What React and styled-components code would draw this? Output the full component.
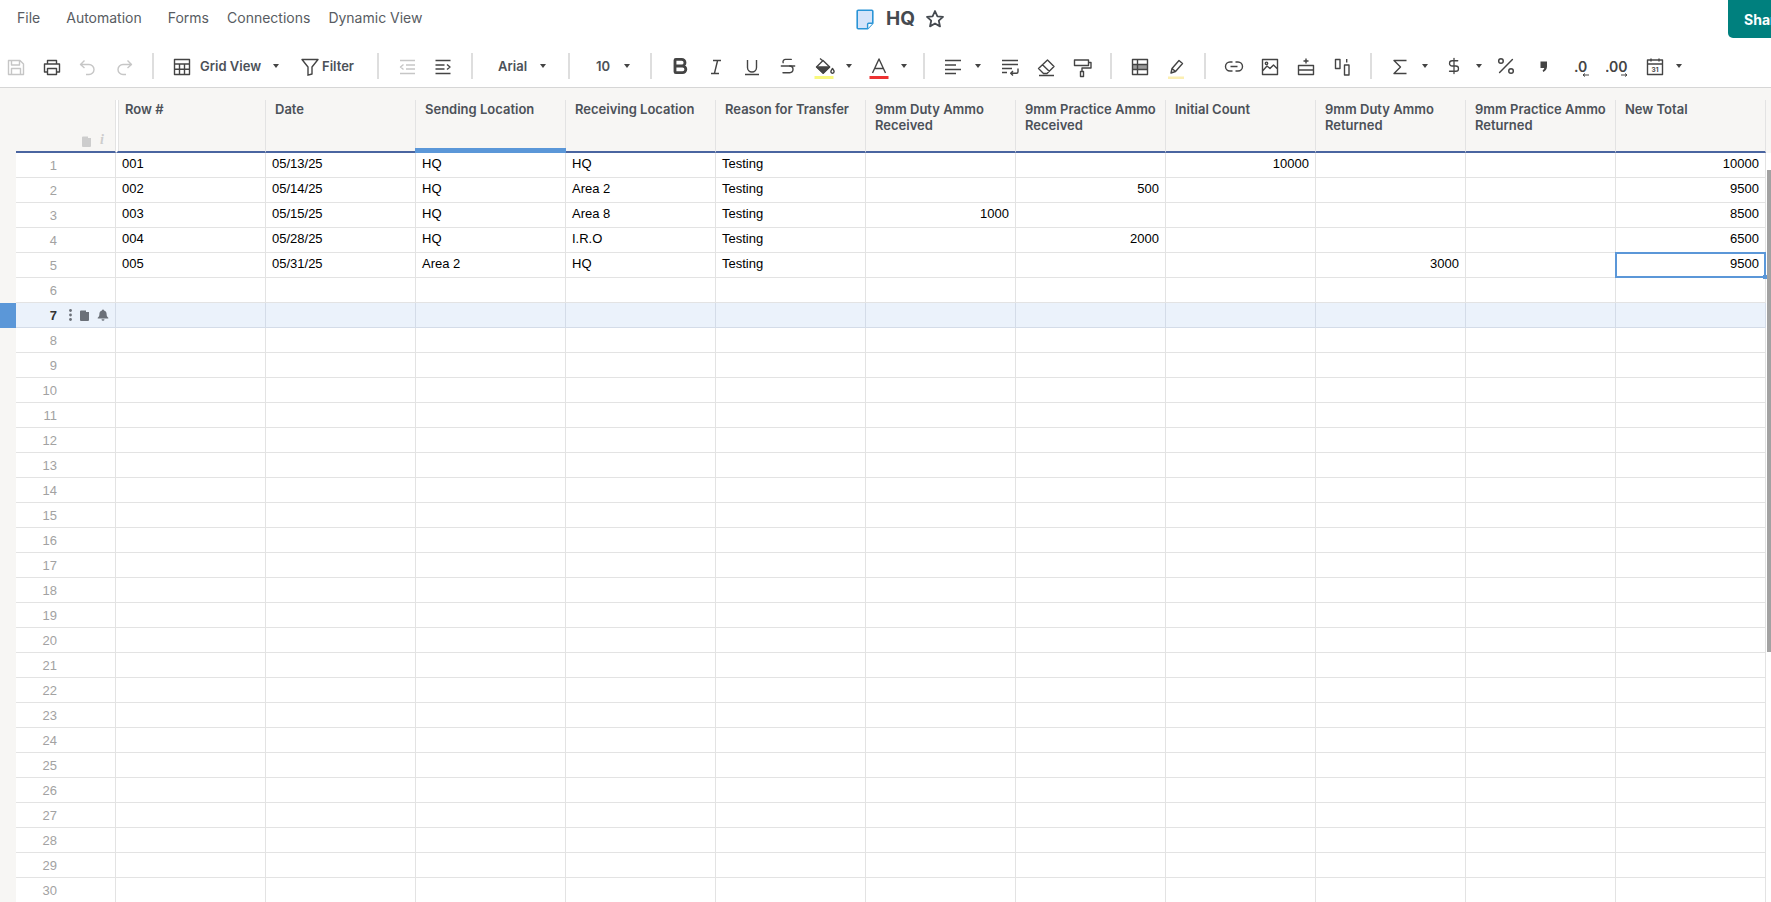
import React from 'react';
import styled, { createGlobalStyle } from 'styled-components';
import { Bold, Strikethrough, DollarSign, Percent } from 'lucide-react';

const Global = createGlobalStyle`
  html, body { margin: 0; padding: 0; height: 902px; overflow: hidden; background: #fff; }
  body { font-family: "Liberation Sans", Arial, sans-serif; }
`;

const Page = styled.div`
  width: 1771px;
  height: 902px;
  overflow: hidden;
  position: relative;
  display: flex;
  flex-direction: column;
  background: #fff;
`;

const TopBar = styled.header`
  height: 44px;
  flex: none;
  display: flex;
  align-items: flex-start;
`;

const Menu = styled.nav`
  display: flex;
  padding: 9px 0 0 8px;
  width: 856px;
  box-sizing: border-box;
  flex: none;
`;

const MenuItem = styled.span`
  font: 400 14px/18px Inter, sans-serif;
  color: #585c62;
  padding: 0 ${p => (p.$wide ? 13 : 9)}px 0 9px;
  margin-right: ${p => (p.$wide ? 4 : 0)}px;
`;

const TitleBlock = styled.div`
  display: flex;
  align-items: center;
  height: 38px;
  gap: 12px;
`;

const DocTitle = styled.h1`
  margin: 0 -2px 0 0;
  font: 700 19px/24px Inter, sans-serif;
  color: #454a50;
`;

const ShareButton = styled.button`
  margin-left: auto;
  margin-right: -60px;
  width: 103px;
  height: 38px;
  flex: none;
  border: 0;
  padding: 0 0 0 16px;
  text-align: left;
  background: #00807e;
  color: #fff;
  font: 700 14px Inter, sans-serif;
  border-radius: 0 0 0 5px;
`;

const Toolbar = styled.div`
  height: 44px;
  flex: none;
  box-sizing: border-box;
  border-bottom: 1px solid #d6d6d6;
  display: flex;
  align-items: center;
  margin-left: -2px;
  color: #444;
`;

const Tool = styled.span`
  flex: none;
  width: ${p => p.$w || 36}px;
  height: 28px;
  margin-left: ${p => p.$ml || 0}px;
  display: flex;
  align-items: center;
  justify-content: center;
  color: ${p => (p.$muted ? '#c6c6c6' : '#444')};
`;

const Sep = styled.span`
  flex: none;
  width: 2px;
  height: 26px;
  background: #dedede;
  margin: 0 10px 0 ${p => p.$ml ?? 10}px;
`;

const ToolLabel = styled.span`
  flex: none;
  margin-left: ${p => p.$ml || 0}px;
  font: 600 13px/18px Inter, sans-serif;
  color: #4c5158;
`;

const Caret = styled.span`
  flex: none;
  width: 14px;
  margin-left: ${p => p.$ml || 0}px;
  display: flex;
  justify-content: center;
  &::before {
    content: '';
    border-left: 3px solid transparent;
    border-right: 3px solid transparent;
    border-top: 4px solid #444;
  }
`;

const Sheet = styled.div`
  flex: 1;
  min-height: 0;
`;

const HeaderRow = styled.div`
  display: grid;
  grid-template-columns: 16px 100px repeat(11, 150px);
  background: #f7f6f4;
  padding-top: 12px;
  height: 65px;
  box-sizing: border-box;
`;

const Corner = styled.div`
  grid-column: 2;
  position: relative;
  border-right: 1px solid #e3e3e3;
  border-bottom: 2px solid #4a65a0;
  display: flex;
  align-items: flex-end;
  justify-content: flex-end;
  gap: 9px;
  padding: 0 11px 4px 0;
  color: #cdcdcd;
`;

const InfoMark = styled.i`
  font: italic 700 14px/14px "Liberation Serif", serif;
  color: #cdcdcd;
`;

const HeadCell = styled.div`
  position: relative;
  box-sizing: border-box;
  border-right: 1px solid #e3e3e3;
  border-bottom: 2px solid #4a65a0;
  padding: 1px 6px 0 ${p => (p.$frozen ? 7 : 9)}px;
  font: 600 13px/16px Inter, sans-serif;
  color: #4c5158;
  ${p => p.$frozen && 'border-left: 2px solid #fff; box-shadow: inset 1px 0 0 #e3e3e3;'}
  ${p => p.$active && `
    &::after {
      content: '';
      position: absolute;
      left: -1px; right: -1px; bottom: -2px;
      height: 5px;
      background: #5b97d8;
    }
  `}
`;

const Row = styled.div`
  display: grid;
  grid-template-columns: 16px 100px repeat(11, 150px);
  height: 25px;
`;

const Gutter = styled.div`
  background: ${p => (p.$on ? '#5b97d8' : '#f7f6f4')};
`;

const RowHead = styled.div`
  display: flex;
  align-items: center;
  box-sizing: border-box;
  background: ${p => (p.$on ? '#ebf2fb' : '#fff')};
  border-right: 1px solid ${p => (p.$on ? '#d4dce8' : '#e3e3e3')};
  border-bottom: 1px solid ${p => (p.$on ? '#d4dce8' : '#e3e3e3')};
`;

const RowNum = styled.span`
  width: 41px;
  flex: none;
  text-align: right;
  padding-top: 2px;
  font: ${p => (p.$on ? 700 : 400)} 13px/22px "Liberation Sans", sans-serif;
  color: ${p => (p.$on ? '#333' : '#a2a2a2')};
`;

const RowTools = styled.span`
  display: flex;
  align-items: center;
  margin-left: 12px;
  gap: 8px;
  color: #6b7078;
`;

const Cell = styled.div`
  position: relative;
  box-sizing: border-box;
  background: ${p => (p.$on ? '#ebf2fb' : '#fff')};
  border-right: 1px solid ${p => (p.$on ? '#d4dce8' : '#e3e3e3')};
  border-bottom: 1px solid ${p => (p.$on ? '#d4dce8' : '#e3e3e3')};
  padding: 0 6px;
  font: 400 13px/22px "Liberation Sans", sans-serif;
  color: #000;
  text-align: ${p => (p.$num ? 'right' : 'left')};
  ${p => p.$selected && `
    &::after {
      content: '';
      position: absolute;
      inset: -1px -1px -1px -1px;
      border: 2px solid #5b97d8;
    }
    &::before {
      content: '';
      position: absolute;
      right: -2px; bottom: -2px;
      width: 4px; height: 4px;
      background: #5b97d8;
      z-index: 1;
    }
  `}
`;

const Scrollbar = styled.div`
  position: absolute;
  right: 0;
  top: 170px;
  width: 4px;
  height: 482px;
  background: #a2a2a2;
`;

const Svg = ({ children, sw = 1.4, w = 24, h = 28 }) => (
  <svg width={w} height={h} viewBox={`0 0 ${w} ${h}`} fill="none" stroke="currentColor" strokeWidth={sw} strokeLinejoin="round">
    {children}
  </svg>
);
const P = ({ d }) => <path d={d} />;

const icons = {
  save: <P d="M4.5 8.5h11.5l3.5 3.5v10.5h-15z M7.5 8.5v4.5h8v-4.5 M7.5 22.5v-6h9v6" />,
  print: <><P d="M7.5 12V8.5h9V12" /><P d="M7.5 20H4.5V12h15v8h-3" /><P d="M7.5 16.5h9v6h-9z" /></>,
  undo: <P d="M8.5 8.5L4.5 12.5 8.5 16 M4.5 12.5H13a5 5 0 0 1 0 10h-3" />,
  redo: <P d="M15.5 8.5l4 4-4 3.5 M19.5 12.5H11a5 5 0 0 0 0 10h3" />,
  grid: <P d="M4.5 7.5h15v15h-15z M4.5 12h15 M4.5 17.3h15 M9.5 12v10.5 M14.5 12v10.5" />,
  filter: <P d="M4 7.5h16l-6 7.5v7l-4 1.2V15z" />,
  outdent: <P d="M5 8.5h15 M11 13h9 M11 17h9 M5 21.5h15 M8.5 12.5L5.5 15l3 2.5" />,
  indent: <P d="M4.5 8.5h15 M4.5 13h9 M4.5 17h9 M4.5 21.5h15 M16 12.5l3 2.5-3 2.5" />,
  italic: <P d="M9 8.5h8 M7 21.5h8 M13.6 8.5l-3.2 13" />,
  underline: <P d="M7.5 8v7.5a4.5 4.5 0 0 0 9 0V8 M5 22.5h14" />,
  fill: (
    <>
      <P d="M4.5 15L11 8.5 17.7 15 11.2 21.3z" />
      <path d="M5 15h12.4l-6.2 6z" fill="currentColor" />
      <P d="M8 6.5l3 2.5" />
      <path d="M20.5 16.5c1 1.5 1.6 2.3 1.6 3.1a1.6 1.6 0 0 1-3.2 0c0-.8.6-1.6 1.6-3.1z" />
      <rect x="2.5" y="24" width="19" height="3" fill="#f9f97e" stroke="none" />
    </>
  ),
  color: (
    <>
      <P d="M5.5 21L12 7l6.5 14 M8 16.5h8" />
      <rect x="2.5" y="24" width="19" height="3" fill="#ee3131" stroke="none" />
    </>
  ),
  align: <P d="M4 8.5h16 M4 13h11 M4 17.5h16 M4 21.5h11" />,
  wrap: <P d="M4 8.5h16 M4 12.5h16 M4 16.5h10 M4 20.5h5 M20 16.5v3.2a1.5 1.5 0 0 1-1.5 1.5H13 M15 19l-2.3 2.2 2.3 2.2" />,
  eraser: <P d="M4.5 16.5L13.5 8l6.5 6.5-7 7H9.5z M8.5 12.8l7 6.7 M5 23.5h15" />,
  roller: <P d="M4.5 8h14v5.5h-14z M18.5 10.5H21v5.5h-9v3.5 M10.5 19.5h3v5h-3z" />,
  table: (
    <>
      <rect x="4.5" y="12.5" width="15" height="5" fill="#9a9a9a" stroke="none" />
      <P d="M4.5 7.5h15v15h-15z M4.5 12.5h15 M4.5 17.5h15 M9.5 7.5v15" />
    </>
  ),
  highlight: (
    <>
      <P d="M7 21l1-4.5L15 8.5l3.5 3-7 8z M8 16.5l3.5 3" />
      <rect x="4" y="24.5" width="16" height="2.5" fill="#fcefb2" stroke="none" />
    </>
  ),
  link: <P d="M10.5 10H8a4.5 4.5 0 0 0 0 9h2.5 M13.5 10H16a4.5 4.5 0 0 1 0 9h-2.5 M8.5 14.5h7" />,
  image: (
    <>
      <P d="M4.5 7.5h15v15h-15z M4.5 19l4.5-5 3 2.5 3.5-3.5 4 4" />
      <circle cx="8.5" cy="11.3" r="1.2" />
    </>
  ),
  insertRow: <P d="M12 6.5v5 M9.5 9h5 M4.5 13.5h15v9h-15z M4.5 18h15" />,
  insertCol: <P d="M5.5 7.5h4.5v9H5.5z M14.5 13h4.5v10h-4.5z M16.7 7v3.5" />,
  sigma: <P d="M18.5 8.5H6l6.5 6.5L6 21.5h12.5" />,
  comma: <path d="M8.5 9.5h6.5v5c0 2.8-1.4 4.3-3.7 5.5l-.7-1.6c1.1-.7 1.6-1.4 1.6-2.4H8.5z" fill="currentColor" stroke="none" />,
  decLess: (
    <>
      <text x="4" y="19.5" fontFamily="Inter, sans-serif" fontSize="14" fontWeight="600" fill="currentColor" stroke="none">.0</text>
      <path d="M19 23h-6 M15 21.5L13 23l2 1.5" strokeWidth="1" />
    </>
  ),
  decMore: (
    <>
      <text x="-1" y="19.5" fontFamily="Inter, sans-serif" fontSize="14" fontWeight="600" fill="currentColor" stroke="none">.00</text>
      <path d="M15 23h6 M19 21.5l2 1.5-2 1.5" strokeWidth="1" />
    </>
  ),
  calendar: (
    <>
      <P d="M4.5 8h15v14.5h-15z M4.5 12h15 M8 6.5v3 M16 6.5v3" />
      <text x="12" y="20" textAnchor="middle" fontFamily="Inter, sans-serif" fontSize="6.5" fontWeight="700" fill="currentColor" stroke="none">31</text>
    </>
  ),
};

const Icon = ({ name }) => <Svg>{icons[name]}</Svg>;

const DocIcon = () => (
  <svg width="18" height="21" viewBox="0 0 18 21">
    <path d="M1.2 2.2a1 1 0 0 1 1-1h13.6a1 1 0 0 1 1 1v12l-5.2 5.6H2.2a1 1 0 0 1-1-1z" fill="#d5e4fa" stroke="#2a94d6" strokeWidth="1.6" />
    <path d="M16.8 14.2h-4.2a1 1 0 0 0-1 1v4.6" fill="#fff" stroke="#2a94d6" strokeWidth="1.4" />
  </svg>
);

const StarIcon = () => (
  <svg width="20" height="20" viewBox="0 0 20 20" fill="none" stroke="#454a50" strokeWidth="1.8" strokeLinejoin="round">
    <path d="M10 2l2.4 5.3 5.6.6-4.2 3.8 1.2 5.7L10 14.5l-5 2.9 1.2-5.7L2 7.9l5.6-.6z" />
  </svg>
);

const SheetDoc = () => (
  <svg width="9" height="11" viewBox="0 0 9 11" fill="currentColor">
    <path d="M0 1.5a1 1 0 0 1 1-1h5v1.5h3v8a1 1 0 0 1-1 1H1a1 1 0 0 1-1-1z" />
  </svg>
);

const Dots = () => (
  <svg width="3" height="12" viewBox="0 0 3 12" fill="currentColor">
    <circle cx="1.5" cy="1.5" r="1.4" /><circle cx="1.5" cy="6" r="1.4" /><circle cx="1.5" cy="10.5" r="1.4" />
  </svg>
);

const BellIcon = () => (
  <svg width="12" height="12" viewBox="0 0 12 12" fill="currentColor">
    <path d="M6 0.5a1 1 0 0 1 1 1c1.7.4 2.6 1.8 2.6 3.6 0 1.8.5 2.7 1.7 3.6v.8H.7v-.8C1.9 7.8 2.4 6.9 2.4 5.1 2.4 3.3 3.3 1.9 5 1.5a1 1 0 0 1 1-1z" />
    <path d="M4.5 10.3h3a1.5 1.5 0 0 1-3 0z" />
  </svg>
);

const columns = [
  'Row #', 'Date', 'Sending Location', 'Receiving Location', 'Reason for Transfer',
  '9mm Duty Ammo Received', '9mm Practice Ammo Received', 'Initial Count',
  '9mm Duty Ammo Returned', '9mm Practice Ammo Returned', 'New Total',
];

const data = [
  ['001', '05/13/25', 'HQ', 'HQ', 'Testing', '', '', '10000', '', '', '10000'],
  ['002', '05/14/25', 'HQ', 'Area 2', 'Testing', '', '500', '', '', '', '9500'],
  ['003', '05/15/25', 'HQ', 'Area 8', 'Testing', '1000', '', '', '', '', '8500'],
  ['004', '05/28/25', 'HQ', 'I.R.O', 'Testing', '', '2000', '', '', '', '6500'],
  ['005', '05/31/25', 'Area 2', 'HQ', 'Testing', '', '', '', '3000', '', '9500'],
];

const ACTIVE_ROW = 7;
const emptyRow = Array(11).fill('');

export default function App() {
  return (
    <Page>
      <Global />
      <TopBar>
        <Menu>
          <MenuItem $wide>File</MenuItem>
          <MenuItem $wide>Automation</MenuItem>
          <MenuItem>Forms</MenuItem>
          <MenuItem>Connections</MenuItem>
          <MenuItem>Dynamic View</MenuItem>
        </Menu>
        <TitleBlock>
          <DocIcon />
          <DocTitle>HQ</DocTitle>
          <StarIcon />
        </TitleBlock>
        <ShareButton>Share</ShareButton>
      </TopBar>

      <Toolbar>
        <Tool $muted><Icon name="save" /></Tool>
        <Tool><Icon name="print" /></Tool>
        <Tool $muted><Icon name="undo" /></Tool>
        <Tool $muted><Icon name="redo" /></Tool>
        <Sep />
        <Tool><Icon name="grid" /></Tool>
        <ToolLabel>Grid View</ToolLabel>
        <Caret $ml={8} />
        <Tool $w={24} $ml={15}><Icon name="filter" /></Tool>
        <ToolLabel>Filter</ToolLabel>
        <Sep $ml={23} />
        <Tool $muted><Icon name="outdent" /></Tool>
        <Tool><Icon name="indent" /></Tool>
        <Sep />
        <ToolLabel $ml={15}>Arial</ToolLabel>
        <Caret $ml={9} />
        <Sep $ml={18} />
        <ToolLabel $ml={16}>10</ToolLabel>
        <Caret $ml={10} />
        <Sep $ml={16} />
        <Tool><Bold size={20} strokeWidth={3.4} /></Tool>
        <Tool><Icon name="italic" /></Tool>
        <Tool><Icon name="underline" /></Tool>
        <Tool><Strikethrough size={20} strokeWidth={1.7} /></Tool>
        <Tool><Icon name="fill" /></Tool>
        <Caret />
        <Tool $ml={5}><Icon name="color" /></Tool>
        <Caret />
        <Sep $ml={12} />
        <Tool><Icon name="align" /></Tool>
        <Caret />
        <Tool $ml={7}><Icon name="wrap" /></Tool>
        <Tool><Icon name="eraser" /></Tool>
        <Tool><Icon name="roller" /></Tool>
        <Sep />
        <Tool><Icon name="table" /></Tool>
        <Tool><Icon name="highlight" /></Tool>
        <Sep />
        <Tool><Icon name="link" /></Tool>
        <Tool><Icon name="image" /></Tool>
        <Tool><Icon name="insertRow" /></Tool>
        <Tool><Icon name="insertCol" /></Tool>
        <Sep />
        <Tool><Icon name="sigma" /></Tool>
        <Caret />
        <Tool $ml={4}><DollarSign size={18} strokeWidth={1.7} /></Tool>
        <Caret />
        <Tool $ml={2}><Percent size={22} strokeWidth={1.6} /></Tool>
        <Tool $ml={2}><Icon name="comma" /></Tool>
        <Tool $ml={2}><Icon name="decLess" /></Tool>
        <Tool><Icon name="decMore" /></Tool>
        <Tool $ml={1}><Icon name="calendar" /></Tool>
        <Caret $ml={-1} />
      </Toolbar>

      <Sheet>
        <HeaderRow>
          <Corner>
            <SheetDoc />
            <InfoMark>i</InfoMark>
          </Corner>
          {columns.map((c, i) => (
            <HeadCell key={c} $frozen={i === 0} $active={c === 'Sending Location'}>{c}</HeadCell>
          ))}
        </HeaderRow>
        {Array.from({ length: 30 }, (_, r) => {
          const n = r + 1;
          const on = n === ACTIVE_ROW;
          const vals = data[r] || emptyRow;
          return (
            <Row key={n}>
              <Gutter $on={on} />
              <RowHead $on={on}>
                <RowNum $on={on}>{n}</RowNum>
                {on && (
                  <RowTools>
                    <Dots />
                    <SheetDoc />
                    <BellIcon />
                  </RowTools>
                )}
              </RowHead>
              {vals.map((v, i) => (
                <Cell key={i} $on={on} $num={i >= 5} $selected={n === 5 && i === 10}>{v}</Cell>
              ))}
            </Row>
          );
        })}
      </Sheet>
      <Scrollbar />
    </Page>
  );
}
